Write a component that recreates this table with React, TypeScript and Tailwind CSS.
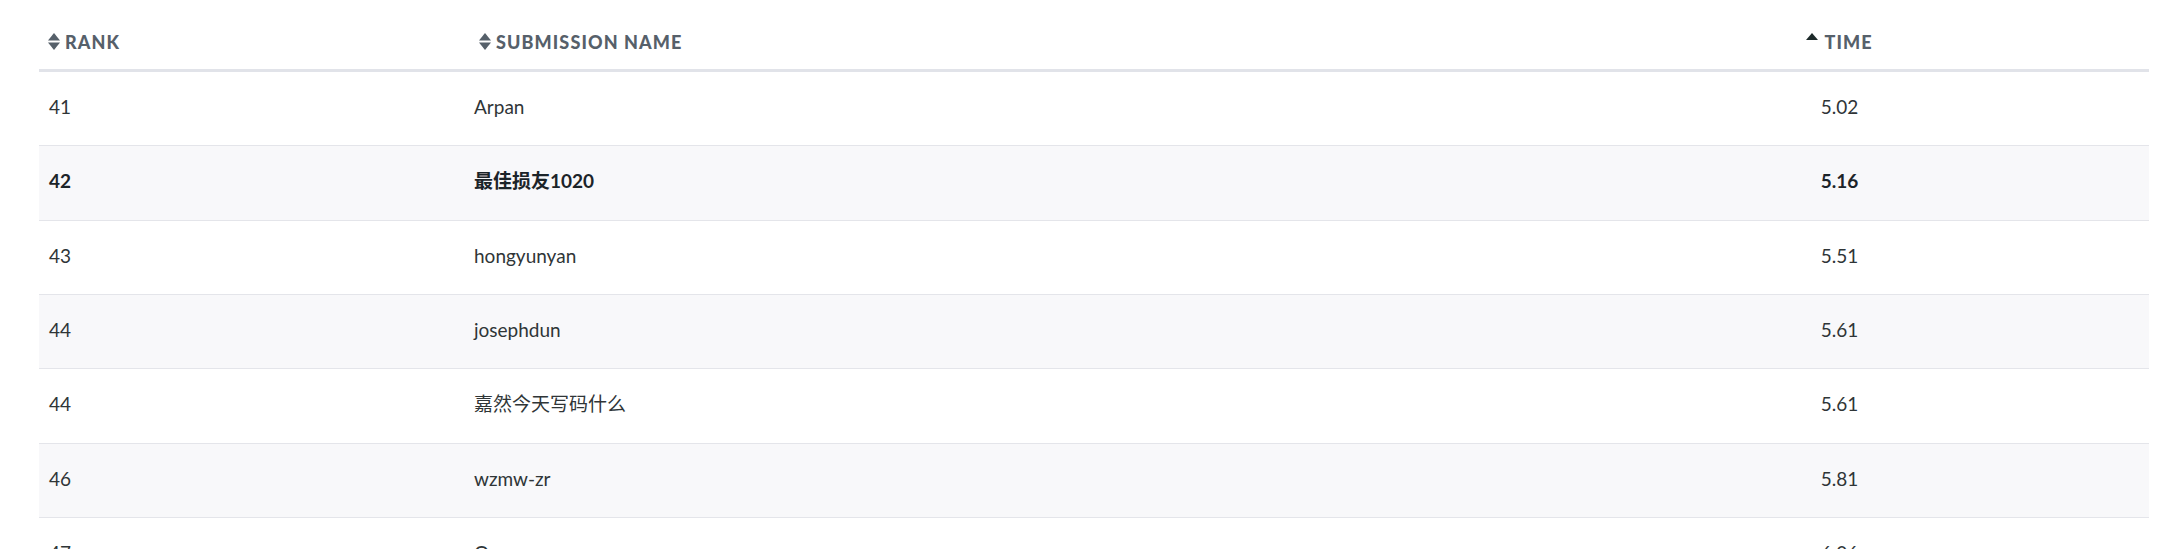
import React from "react";

type Row = { rank: string; name: string; time: string; bold?: boolean };

const rows: Row[] = [
  { rank: "41", name: "Arpan", time: "5.02" },
  { rank: "42", name: "最佳损友1020", time: "5.16", bold: true },
  { rank: "43", name: "hongyunyan", time: "5.51" },
  { rank: "44", name: "josephdun", time: "5.61" },
  { rank: "44", name: "嘉然今天写码什么", time: "5.61" },
  { rank: "46", name: "wzmw-zr", time: "5.81" },
  { rank: "47", name: "Oscar", time: "6.06" },
];

function SortBoth() {
  return (
    <svg width="12" height="17" viewBox="0 0 12 17" className="shrink-0">
      <path d="M6 0 L12 7.6 L0 7.6 Z" fill="#56606a" />
      <path d="M6 17 L12 9.4 L0 9.4 Z" fill="#56606a" />
    </svg>
  );
}

function SortUp() {
  return (
    <svg width="12" height="17" viewBox="0 0 12 17" className="shrink-0">
      <path d="M6 0 L12 7 L0 7 Z" fill="#1d2a2a" />
    </svg>
  );
}

const font = { fontFamily: "Lato, 'Noto Sans CJK SC', sans-serif" };

export default function App() {
  return (
    <div className="w-[2176px] h-[549px] bg-white overflow-hidden" style={font}>
      <div className="ml-[39px] w-[2110px]">
        {/* header */}
        <div className="grid grid-cols-[426px_1065px_619px] h-[72px] border-b-[3px] border-[#e1e3e9] text-[18px] leading-[18px] font-black tracking-[1.1px] text-[#56606a] uppercase">
          <div className="flex items-start gap-[5px] pl-[9px] pt-[33px]">
            <SortBoth />
            <span className="mt-[0px]">Rank</span>
          </div>
          <div className="flex items-start gap-[5px] pl-[14px] pt-[33px]">
            <SortBoth />
            <span className="mt-[0px]">Submission Name</span>
          </div>
          <div className="flex items-start justify-center gap-[6px] pt-[33px]">
            <SortUp />
            <span className="mt-[0px]">Time</span>
          </div>
        </div>
        {/* rows */}
        {rows.map((r, i) => (
          <div
            key={i}
            className={
              "grid grid-cols-[426px_1065px_619px] h-[74.33px] border-b border-[#e4e5ea] text-[19px] leading-[24px] " +
              (i % 2 === 1 ? "bg-[#f8f8fa] " : "bg-white ") +
              (r.bold ? "font-bold text-[#1c2429]" : "text-[#2f3537]")
            }
          >
            <div className="pl-[10px] pt-[23px]">{r.rank}</div>
            <div className="pl-[9px] pt-[23px]">{r.name}</div>
            <div className="pt-[23px] text-center">{r.time}</div>
          </div>
        ))}
      </div>
    </div>
  );
}
